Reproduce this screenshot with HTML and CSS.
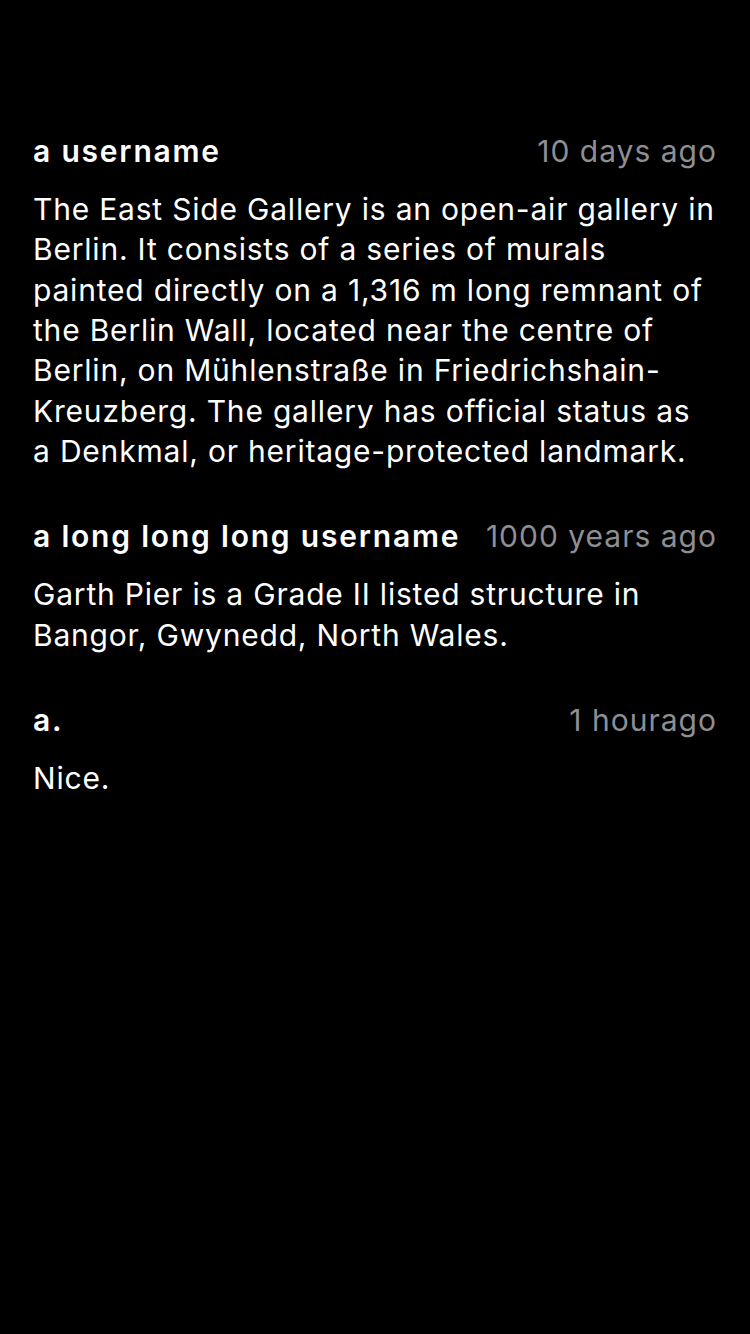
FILE: index.html
```html
<!DOCTYPE html>
<html>
<head>
<meta charset="utf-8">
<link rel="stylesheet" href="styles.css">
</head>
<body>
<main class="list">
  <article class="comment">
    <header class="head"><span class="user">a username</span><span class="time">10 days ago</span></header>
    <p class="body">The East Side Gallery is an open-air gallery in Berlin. It consists of a series of murals painted directly on a 1,316 m long remnant of the Berlin Wall, located near the centre of Berlin, on Mühlenstraße in Friedrichshain-Kreuzberg. The gallery has official status as a Denkmal, or heritage-protected landmark.</p>
  </article>
  <article class="comment">
    <header class="head"><span class="user">a long long long username</span><span class="time">1000 years ago</span></header>
    <p class="body">Garth Pier is a Grade II listed structure in Bangor, Gwynedd, North Wales.</p>
  </article>
  <article class="comment">
    <header class="head"><span class="user">a.</span><span class="time">1 hourago</span></header>
    <p class="body">Nice.</p>
  </article>
</main>
</body>
</html>
```
FILE: styles.css
```css
html, body {
  margin: 0;
  padding: 0;
  background: #000;
}
body {
  width: 750px;
  min-height: 1334px;
  font-family: Inter, "Noto Sans", sans-serif;
  color: #fff;
}
.list {
  padding: 131px 33px 0 33px;
  display: flex;
  flex-direction: column;
  gap: 45px;
}
.comment {
  display: flex;
  flex-direction: column;
  gap: 18px;
}
.head {
  display: flex;
  justify-content: space-between;
  align-items: center;
  gap: 20px;
  line-height: 40px;
  font-size: 30px;
}
.user {
  font-weight: 600;
  letter-spacing: 1.8px;
  white-space: nowrap;
}
.time {
  color: #8e8e93;
  letter-spacing: 1px;
  white-space: nowrap;
}
.body {
  margin: 0 2px 0 0;
  font-size: 30px;
  line-height: 40.33px;
  letter-spacing: 0.8px;
}
```
